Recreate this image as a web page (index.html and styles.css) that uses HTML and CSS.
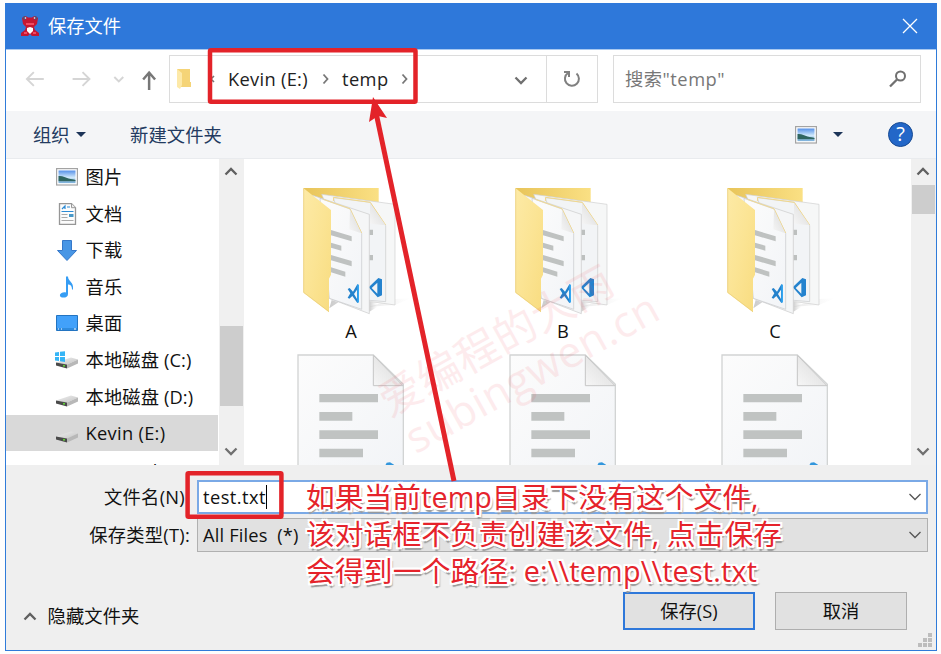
FILE: index.html
```html
<!DOCTYPE html>
<html lang="zh-CN">
<head>
<meta charset="utf-8">
<title>保存文件</title>
<link rel="stylesheet" href="styles.css">
</head>
<body>
<svg class="defs" width="0" height="0">
  <defs>
    <linearGradient id="flap" x1="0" y1="0" x2="1" y2="1"><stop offset="0" stop-color="#fdeaa6"/><stop offset=".5" stop-color="#fbe494"/><stop offset="1" stop-color="#f8dc80"/></linearGradient>
    <linearGradient id="back" x1="0" y1="0" x2="1" y2="0"><stop offset="0" stop-color="#e8c459"/><stop offset="1" stop-color="#fae084"/></linearGradient>
    <linearGradient id="paper" x1="0" y1="0" x2="1" y2="1"><stop offset="0" stop-color="#fcfcfc"/><stop offset="1" stop-color="#f2f4f7"/></linearGradient>
    <linearGradient id="fold" x1="0" y1="1" x2="1" y2="0"><stop offset="0" stop-color="#f6f6f6"/><stop offset="1" stop-color="#d8d8d8"/></linearGradient>
    <linearGradient id="shade" x1="0" y1="0" x2="1" y2="0"><stop offset="0" stop-color="#aaa" stop-opacity=".6"/><stop offset="1" stop-color="#ccc" stop-opacity="0"/></linearGradient>
    <linearGradient id="sky" x1="0" y1="0" x2="0" y2="1"><stop offset="0" stop-color="#5590e8"/><stop offset=".55" stop-color="#cfe8fb"/><stop offset="1" stop-color="#78aeda"/></linearGradient>
    <linearGradient id="top" x1="0" y1="0" x2="1" y2="1"><stop offset="0" stop-color="#f0f0f0"/><stop offset="1" stop-color="#c4c4c4"/></linearGradient>
    <symbol id="picture" viewBox="0 0 22 18">
      <rect x=".6" y=".6" width="20.8" height="16.4" fill="#fff" stroke="#a3a3a3" stroke-width="1.2"/>
      <rect x="2.5" y="2.5" width="17" height="12.6" fill="url(#sky)"/>
      <path d="M2.5 8c4-.5 7 1.500 10 2.500s5 .5 7 1.500v1.300H2.500z" fill="#2f6560"/>
    </symbol>
    <symbol id="drive" viewBox="0 0 22 13">
      <path d="M0 6.500 15 1.500 22 3.500 11 8.500z" fill="url(#top)"/>
      <path d="m0 6.500 11 2v4L0 9.500z" fill="#4a4a4a"/>
      <path d="m11 8.500 11-5v4l-11 5z" fill="#b8b8b8"/>
      <circle cx="8" cy="9.700" r="1" fill="#64df35"/>
    </symbol>
    <symbol id="folder" viewBox="0 0 130 130">
      <g transform="translate(4 -10) scale(.33333)">
        <path d="M237 395 315 390 362 370 315 372zM118 400 145 382 125 375z" fill="url(#shade)"/>
        <path d="M238 410 262 396 262 380 238 380z" fill="url(#shade)"/>
        <path d="M40 39H266V120H60z" fill="url(#back)"/>
        <path d="m95 58 220 30v302l-85-12z" fill="#f6f7f7" stroke="#cfcfcf" stroke-width="2"/>
        <path d="m130 68 110 14 47 70v228l-60-5z" fill="#f2f4f6" stroke="#c8cacc" stroke-width="2"/>
        <path d="M130 78 131 67 241 82 287 150" fill="none" stroke="#f2d88b" stroke-width="3"/>
        <path d="m240 84 47 67-47-5z" fill="url(#fold)"/>
        <path d="M238 164h11v16h-11zM238 240h11v16h-11z" fill="#bdc0bf"/>
        <path d="M236 337 265 309l11 4v48l-13 6zM262 323l-17 16 17 17z" fill="#2583ce" fill-rule="evenodd"/>
        <path d="m68 61 170 57v298L118 370z" fill="#f5f6f7" stroke="#c9c9c9" stroke-width="2"/>
        <path d="m90 70 90 32 35 73v228l-97-33z" fill="url(#paper)" stroke="#c5c7ca" stroke-width="2"/>
        <path d="M100 73 180 101 215 174" fill="none" stroke="#f0d993" stroke-width="3"/>
        <path d="m180 104 34 71-36-12z" fill="url(#fold)"/>
        <path d="m123 165 62 19v15l-62-18zM123 203l31 9v15l-31-9zM123 240l62 18v16l-62-18zM123 277l43 13v15l-43-13z" fill="#bfc2c1"/>
        <path d="m173 342 6-3 10 11 13-22 5 2v51l-5 3-15-21-9 8-5-3 8-13zM201 344l-9 13 9 15z" fill="#2482cc" fill-rule="evenodd"/>
        <path d="m202 328 5 2v51l-5 3z" fill="#35a7f2"/>
        <path d="m40 39 83 66v194l-6 12v101l-77-59z" fill="url(#flap)"/>
        <path d="M41 41v311l76 58" fill="none" stroke="#e8cc78" stroke-width="2"/>
      </g>
    </symbol>
    <symbol id="textfile" viewBox="0 0 110 115">
      <g transform="translate(-6 -10) scale(.33333)">
        <path d="M24 45H250l90 88v260H24z" fill="url(#paper)" stroke="#d2d4d4" stroke-width="4"/>
        <path d="M250 46v91h89z" fill="url(#fold)" stroke="#c6c6c6" stroke-width="3"/>
        <path d="M88 162h176v25H88zM88 216h99v26H88zM88 271h176v26H88zM88 326h131v26H88z" fill="#c0c3c2"/>
        <path d="m284 380 6-12 10-1 12 7v8z" fill="#3296dc"/>
      </g>
    </symbol>
    <symbol id="up" viewBox="0 0 14 10"><path d="M1.500 8.500 7 3l5.500 5.500" fill="none" stroke="#606060" stroke-width="2.300"/></symbol>
    <symbol id="down" viewBox="0 0 14 10"><path d="M1.500 1.500 7 7l5.500-5.500" fill="none" stroke="#707070" stroke-width="2.300"/></symbol>
    <symbol id="thin" viewBox="0 0 14 10"><path d="M1.500 2 7 7.500 12.500 2" fill="none" stroke="#555" stroke-width="1.300"/></symbol>
  </defs>
</svg>

<main class="dialog">
  <header class="titlebar">
    <svg class="app" width="20" height="22" viewBox="0 0 20 22">
      <path d="M2 3q3-3 6-.5h4Q15 0 18 3l-1 6-3 3 1 3 4 3v3h-7l-2-2-2 2H1v-3l4-3 1-3-3-3z" fill="#c51632"/>
      <path d="M6 8h8v2H6zM4 17h3v2H4zM13 17h3v2h-3z" fill="#f04a62"/>
      <circle cx="4.500" cy="3" r="1.800" fill="#554c70"/><circle cx="15.500" cy="3" r="1.800" fill="#554c70"/><circle cx="5.500" cy="3" r=".8" fill="#fff"/><circle cx="14.500" cy="3" r=".8" fill="#fff"/>
      <path d="m7 13 3-1 3 1v3l-3 3-3-3z" fill="#fff"/>
    </svg>
    <span>保存文件</span>
    <svg class="close" width="16" height="16" viewBox="0 0 16 16"><path d="m1 1 14 14M15 1 1 15" stroke="#fff" stroke-width="1.300"/></svg>
  </header>

  <nav class="navbar">
    <svg class="arrows" width="164" height="30" viewBox="0 0 164 30" fill="none">
      <path d="M38 15H21m7-7-7 7 7 7M67 15h17m-7-7 7 7-7 7M109 13l4.500 4.500 4.500-4.500" stroke="#d5d5d5" stroke-width="1.900"/>
      <path d="M144 26V9m-6 6.500 6-7 6 7" stroke="#777" stroke-width="2.500"/>
    </svg>
    <div class="address">
      <svg class="mini-folder" width="16" height="22" viewBox="0 0 16 22"><path d="M1 1h13v13h1v5H5z" fill="#f5d477"/><path d="m1 1 5 4v12l-2 4-3-2z" fill="#fde9a8"/></svg>
      <svg class="back" width="8" height="12" viewBox="0 0 8 12"><path d="m6 3-3 3 3 3" fill="none" stroke="#777" stroke-width="1.600"/></svg>
      <span class="crumb drive-name">Kevin (E:)</span>
      <svg class="sep" width="8" height="12" viewBox="0 0 8 12"><path d="m1.500 1.500 4 4.500-4 4.500" fill="none" stroke="#777" stroke-width="1.800"/></svg>
      <span class="crumb dir-name">temp</span>
      <svg class="sep" width="8" height="12" viewBox="0 0 8 12"><path d="m1.500 1.500 4 4.500-4 4.500" fill="none" stroke="#777" stroke-width="1.800"/></svg>
      <svg class="history" width="14" height="10"><use href="#down"/></svg>
      <div class="refresh"><svg width="20" height="20" viewBox="0 0 20 20"><path d="M14.500 4.500a7 7 0 1 1-8.500-.5M2 3h5v5" fill="none" stroke="#808080" stroke-width="2"/></svg></div>
    </div>
    <div class="search"><span>搜索"temp"</span><svg width="18" height="18" viewBox="0 0 18 18"><circle cx="11.500" cy="6" r="4.500" fill="none" stroke="#707070" stroke-width="2"/><path d="m8 9.500-7 7" stroke="#707070" stroke-width="2.300"/></svg></div>
  </nav>

  <section class="toolbar">
    <span>组织</span><i class="caret"></i><span class="new">新建文件夹</span>
    <svg class="view" width="22" height="18"><use href="#picture"/></svg><i class="caret view-caret"></i>
    <span class="help">?</span>
  </section>

  <section class="browser">
    <aside class="tree">
      <div class="row"><svg width="22" height="18"><use href="#picture"/></svg><span>图片</span></div>
      <div class="row"><svg width="22" height="22" viewBox="0 0 22 22"><path d="M3.500.7h12l4 4v16.600h-16z" fill="#fcfcfc" stroke="#969696" stroke-width="1.300"/><path d="M15.500.7v4h4" fill="#eee" stroke="#999"/><path d="m6 6 3-3v3m2-2h3M5.500 8.500h12" stroke="#2c8bd5" fill="none" stroke-width="1.200"/><path d="M5.500 11.500h6m-6 3h6m-6 3h12" stroke="#aaa"/><path d="M13 11h4.500v3H13z" fill="#4898c8"/></svg><span>文档</span></div>
      <div class="row"><svg width="22" height="22" viewBox="0 0 22 22"><path d="M6.500 1.500h9v10h5L11 21.500 1.500 11.500h5z" fill="#4896e5" stroke="#3578ca"/></svg><span>下载</span></div>
      <div class="row"><svg width="22" height="22" viewBox="0 0 22 22"><path d="M10 .5h2c0 5 6 5 5 13h-1c0-4-2-5-4-5v9.500c0 3-3 4-6 3.500-4-1-2-6 4-5z" fill="#369df4"/></svg><span>音乐</span></div>
      <div class="row"><svg width="22" height="16" viewBox="0 0 22 16"><path d="M.5.5h21v15H.5z" fill="#42a1fa" stroke="#2374c1"/><path d="M1 14h20" stroke="#1c76c4"/><path d="M2 14h1m2 0h1m12 0h2" stroke="#fff"/></svg><span>桌面</span></div>
      <div class="row"><svg class="sysdrive" width="24" height="18" viewBox="0 0 24 18"><svg x="2" y="5" width="22" height="13"><use href="#drive"/></svg><path d="M1 1.500 5 1v4H1zM6 .8l5-.6V5H6zM1 6h4v4l-4-.5zM6 6h5v5l-5-.8z" fill="#36b5f6"/></svg><span>本地磁盘 (C:)</span></div>
      <div class="row"><svg class="disk" width="22" height="13"><use href="#drive"/></svg><span>本地磁盘 (D:)</span></div>
      <div class="row selected"><svg class="disk" width="22" height="13"><use href="#drive"/></svg><span>Kevin (E:)</span></div>
      <div class="row"><span class="noicon">Research</span></div>
    </aside>
    <div class="scroll tree-scroll"><svg width="14" height="10"><use href="#up"/></svg><div class="thumb"></div><svg width="14" height="10"><use href="#down"/></svg></div>
    <div class="files">
      <div class="file"><svg width="130" height="130"><use href="#folder"/></svg><span>A</span></div>
      <div class="file"><svg width="130" height="130"><use href="#folder"/></svg><span>B</span></div>
      <div class="file"><svg width="130" height="130"><use href="#folder"/></svg><span>C</span></div>
      <div class="file doc"><svg width="110" height="115"><use href="#textfile"/></svg></div>
      <div class="file doc"><svg width="110" height="115"><use href="#textfile"/></svg></div>
      <div class="file doc"><svg width="110" height="115"><use href="#textfile"/></svg></div>
    </div>
    <div class="scroll file-scroll"><svg width="14" height="10"><use href="#up"/></svg><div class="thumb"></div><svg width="14" height="10"><use href="#down"/></svg></div>
  </section>

  <footer class="footer">
    <div class="field"><label class="name-label">文件名(N):</label><div class="combo name"><span>test.txt</span><i class="cursor"></i><svg width="14" height="10"><use href="#thin"/></svg></div></div>
    <div class="field"><label>保存类型(T):</label><div class="combo type"><span>All Files&nbsp; (*)</span><svg width="14" height="10"><use href="#thin"/></svg></div></div>
    <div class="actions">
      <svg width="14" height="10"><use href="#up"/></svg><span class="hide">隐藏文件夹</span>
      <button class="save">保存(S)</button><button>取消</button>
    </div>
    <svg class="grip" width="14" height="14" viewBox="0 0 14 14"><path d="M10 0h4v4h-4zM5 5h4v4H5zM10 5h4v4h-4zM0 10h4v4H0zM5 10h4v4H5zM10 10h4v4h-4z" fill="#bdbdbd"/></svg>
  </footer>
</main>

<svg class="overlay" width="941" height="654" viewBox="0 0 941 654">
  <g class="watermark" transform="translate(395 417) rotate(-29)">
    <text x="-5" y="-2" textLength="260">爱编程的大雨</text>
    <text x="0" y="43" textLength="282">subingwen.cn</text>
  </g>
  <path d="M376.500 115 454 481" stroke="#e32329" stroke-width="5"/>
  <path d="m373 97 14 21-9-2-9 6z" fill="#e32329"/>
  <rect x="210" y="50.200" width="205.500" height="51.500" rx="1" fill="none" stroke="#e32329" stroke-width="4.500"/>
  <rect x="187.600" y="473.200" width="93.800" height="43.500" rx="1" fill="none" stroke="#e32329" stroke-width="4.500"/>
</svg>
<div class="note"><p class="n1">如果当前temp目录下没有这个文件,</p><p class="n2">该对话框不负责创建该文件, 点击保存</p><p class="n3">会得到一个路径: e:\\temp\\test.txt</p></div>
</body>
</html>
```
FILE: styles.css
```css
* { box-sizing: border-box; }
body { margin: 0; padding: 3px 4px 3px 5px; width: 941px; height: 654px; overflow: hidden; background: #fdfdfd; color: #111; font: 18.3px/24px "Open Sans", "Noto Sans CJK SC", sans-serif; }
svg { display: block; flex: none; }
span, label, p { white-space: nowrap; }
.defs { position: absolute; }
.dialog { width: 932px; height: 648px; border: 1px solid #2f7bd9; border-top: 0; display: flex; flex-direction: column; background: #efefef; }
.titlebar { height: 46px; flex: none; background: #2e78da; color: #fff; display: flex; align-items: center; padding: 0 18px 0 14px; }
.titlebar span { margin-left: 8px; }
.titlebar .close { margin-left: auto; }

.navbar { height: 62px; flex: none; background: #fff; border-top: 1px solid #a9c9f0; display: flex; align-items: flex-start; padding: 5px 15px 0 0; }
.arrows { margin-top: 9px; width: 163px; }
.address { width: 429px; height: 48px; border: 1.500px solid #dcdcdc; display: flex; align-items: center; }
.mini-folder { margin-left: 6px; }
.back { margin-left: 16px; }
.crumb { color: #222; }
.drive-name { margin-left: 12px; width: 94px; letter-spacing: .3px; }
.dir-name { margin-left: 12px; width: 59px; letter-spacing: .4px; }
.history { margin-left: auto; margin-right: 18px; margin-top: 3px; }
.refresh { width: 51px; height: 100%; border-left: 1px solid #dcdcdc; display: flex; align-items: center; justify-content: center; }
.search { margin-left: 15px; width: 308px; height: 48px; border: 1.500px solid #dcdcdc; display: flex; align-items: center; padding: 0 13px 0 11px; color: #777; letter-spacing: .5px; }
.search svg { margin-left: auto; }

.toolbar { height: 48px; flex: none; background: #f4f5f7; border-bottom: 1px solid #e9ebee; display: flex; align-items: center; padding: 0 23px 0 27px; color: #223a60; }
.caret { border: 5px solid transparent; border-top-color: #1c3458; border-bottom: 0; margin-left: 6px; }
.new { margin-left: 44.500px; letter-spacing: .1px; }
.view { margin-left: auto; }
.view-caret { margin: 0 45px 0 16px; }
.help { width: 25px; height: 25px; border-radius: 50%; background: #2367c8; border: 1.500px solid #174a93; color: #fff; text-align: center; line-height: 22px; font-size: 20px; }

.browser { height: 306px; flex: none; display: flex; background: #fff; overflow: hidden; }
.tree { width: 213px; overflow: hidden; }
.row { height: 36.550px; width: 212px; padding-left: 50px; display: flex; align-items: center; letter-spacing: .12px; }
.row span { margin-left: 7.500px; }
.row .noicon { margin: 2px 0 0 29px; }
.row .disk { margin-top: 7px; }
.row .sysdrive { margin-left: -2px; }
.selected { background: #d9d9d9; letter-spacing: .3px; }
.scroll { width: 25px; background: #f0f0f0; display: flex; flex-direction: column; align-items: center; padding: 7px 1px 0 0; }
.scroll .thumb { width: 23px; background: #cdcdcd; flex: none; }
.tree-scroll .thumb { height: 80px; margin: 150px 0 41px; }
.file-scroll .thumb { height: 29px; margin: 9px 0 233px; }
.files { width: 667px; height: 306px; padding: 26px 0 0 1px; display: grid; grid-template-columns: repeat(3, 212px); grid-template-rows: 165px 115px; overflow: hidden; }
.file { display: flex; flex-direction: column; align-items: center; }
.file span { margin-top: 4px; }

.footer { flex: 1; padding: 15px 8px 0 0; position: relative; }
.field { display: flex; align-items: center; }
.field label { width: 184px; text-align: right; margin-right: 7px; letter-spacing: .25px; }
.combo { flex: 1; height: 34px; display: flex; align-items: center; padding: 0 5px; }
.combo svg { margin-left: auto; }
.name { border: 2px solid #7aa9e6; background: #fff; padding: 0 4px; }
.name span { letter-spacing: .45px; }
.type { height: 34px; border: 1px solid #b0b0b0; background: #e1e1e1; letter-spacing: .15px; }
.field + .field { margin-top: 4px; }
.cursor { width: 1px; height: 24px; background: #000; }
.actions { display: flex; align-items: center; margin: 40px 21px 0 17px; }
.hide { margin: 9px auto 0 10.500px; letter-spacing: .1px; }
.actions svg { margin-top: 9px; }
button { width: 132px; height: 38px; padding: 0; font: inherit; color: #111; background: #e1e1e1; border: 1px solid #aeaeae; margin-left: 20px; }
.save { border: 2px solid #2e78da; }
.grip { position: absolute; right: 4px; bottom: 3px; }

.overlay { position: absolute; left: 0; top: 0; }
.watermark { fill: #f03040; opacity: .09; font-size: 43px; }
.note { position: absolute; left: 306px; top: 478px; color: #e5232b; font-size: 28.700px; line-height: 37px; text-shadow: -2px 0 #fff, 2px 0 #fff, 0 -2px #fff, 0 2px #fff, -2px -2px #fff, 2px 2px #fff, -2px 2px #fff, 2px -2px #fff, 1px 4px 1px #999, 3px 3px 1px #bbb; }
.note p { margin: 0; }
.n1 { letter-spacing: .1px; }
.n2 { letter-spacing: .12px; }
.n3 { letter-spacing: .22px; }
```
